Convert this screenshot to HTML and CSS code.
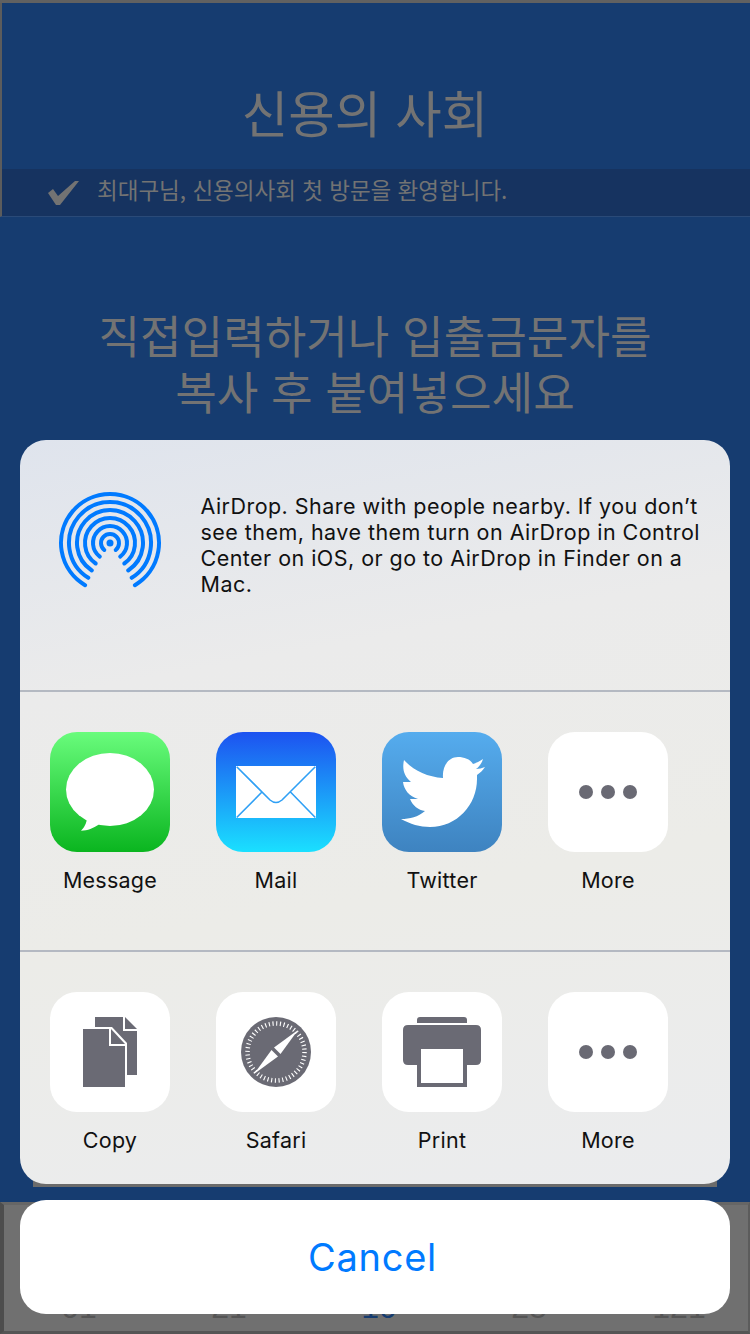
FILE: index.html
```html
<!DOCTYPE html>
<html lang="ko">
<head>
    <meta charset="UTF-8">
    <title>신용의 사회</title>
    <link rel="stylesheet" href="styles.css">
</head>
<body>

<div class="app">
    <div class="top-band">
        <h1>신용의 사회</h1>
        <div class="welcome">
            <svg class="check" viewBox="0 0 32 26" width="32" height="26"><path d="M1 13 L6 9 L11 16 L28 1 L32 1 L13 25 L9 25 Z" fill="#737373"/></svg>
            <span>최대구님, 신용의사회 첫 방문을 환영합니다.</span>
        </div>
    </div>
    <p class="prompt">직접입력하거나 입출금문자를<br>복사 후 붙여넣으세요</p>
    <div class="paste-box"></div>
    <div class="tabbar">
        <span>01</span>
        <span>21</span>
        <span class="on">10</span>
        <span>28</span>
        <span>121</span>
    </div>
</div>

<div class="sheet">
    <div class="panel">
        <div class="airdrop">
            <svg class="airdrop-icon" viewBox="0 0 104 104" width="104" height="104">
                <circle cx="52" cy="52" r="3.5" fill="#007aff"/>
                <g fill="none" stroke="#007aff" stroke-width="4" stroke-linecap="round">
                    <path d="M46.3 59 A9 9 0 1 1 57.7 59"/>
                    <path d="M41.8 65.6 A17 17 0 1 1 62.2 65.6"/>
                    <path d="M37.7 72.5 A25 25 0 1 1 66.3 72.5"/>
                    <path d="M33.8 79.5 A33 33 0 1 1 70.2 79.5"/>
                    <path d="M30.3 86.8 A41 41 0 1 1 73.7 86.8"/>
                    <path d="M27.1 94.2 A49 49 0 1 1 76.9 94.2"/>
                </g>
            </svg>
            <p>AirDrop. Share with people nearby. If you don’t see them, have them turn on AirDrop in Control Center on iOS, or go to AirDrop in Finder on a Mac.</p>
        </div>

        <div class="row">
            <div class="item">
                <div class="tile tile-message">
                    <svg viewBox="0 0 120 120" width="120" height="120">
                        <ellipse cx="60" cy="57.5" rx="44" ry="36.5" fill="#fff"/>
                        <path d="M37 85 C37 91 34 96 31 98.7 C38 98.7 43 96 49 92.5 Z" fill="#fff"/>
                    </svg>
                </div>
                <span>Message</span>
            </div>
            <div class="item">
                <div class="tile tile-mail">
                    <svg viewBox="0 0 120 120" width="120" height="120">
                        <rect x="20" y="34" width="80" height="52" fill="#fff"/>
                        <path d="M20.7 34.7 L54 68 Q60 73 66 68 L99.3 34.7 M20.7 85.5 L45.7 60.3 M99.3 85.5 L74.7 60.3" fill="none" stroke="#2fa0f5" stroke-width="1.6"/>
                    </svg>
                </div>
                <span>Mail</span>
            </div>
            <div class="item">
                <div class="tile tile-twitter">
                    <svg viewBox="0 0 120 120" width="120" height="120"><path d="M61 46 C45 45 31 38 22 28 C20 37 22 44 29 50 C26 50 23 50 21 50 C22 58 27 64 36 67 L28 67 C31 74 36 78 43 79 C36 85 28 87 19 87 C28 92 38 95 48 95 C75 95 95 73 95 47 L95 43 C98 41 101 38 103 35 C100 36 97 37 94 37 C97 35 100 31 101 27 C98 29 94 31 91 32 C88 27 82 25 76 25 C66 25 60 35 61 46 Z" fill="#fff"/></svg>
                </div>
                <span>Twitter</span>
            </div>
            <div class="item">
                <div class="tile dots"><i></i><i></i><i></i></div>
                <span>More</span>
            </div>
        </div>

        <div class="row">
            <div class="item">
                <div class="tile">
                    <svg viewBox="0 0 120 120" width="120" height="120">
                        <path d="M45 25 H73 V39 H87 V83 H45 Z" fill="#6a6a74"/>
                        <path d="M75 25 L87 37 H75 Z" fill="#6a6a74"/>
                        <path d="M31 35 H62 L77 51 V97 H31 Z" fill="#fff"/>
                        <path d="M33 37 H59 V54 H75 V95 H33 Z" fill="#6a6a74"/>
                        <path d="M61 37 L75 52 H61 Z" fill="#6a6a74"/>
                    </svg>
                </div>
                <span>Copy</span>
            </div>
            <div class="item">
                <div class="tile">
                    <svg viewBox="0 0 120 120" width="120" height="120">
                        <circle cx="60" cy="60" r="35" fill="#6a6a74"/>
                        <circle cx="60" cy="60" r="28.5" fill="none" stroke="#fff" stroke-width="4.5" stroke-dasharray="1.1 2.63"/>
                        <path d="M82 38 L64.5 62 L58 55.5 Z" fill="#fff"/>
                        <path d="M38 82 L62 64.5 L55.5 58 Z" fill="#fff"/>
                    </svg>
                </div>
                <span>Safari</span>
            </div>
            <div class="item">
                <div class="tile">
                    <svg viewBox="0 0 120 120" width="120" height="120">
                        <path d="M35 31 V28 Q35 25 38 25 H82 Q85 25 85 28 V31 Z" fill="#6a6a74"/>
                        <path d="M26 33 H94 Q99 33 99 38 V68 Q99 73 94 73 H26 Q21 73 21 68 V38 Q21 33 26 33 Z" fill="#6a6a74"/>
                        <rect x="35" y="55" width="50" height="40" fill="#6a6a74"/>
                        <rect x="39" y="57" width="42" height="34" fill="#fff"/>
                    </svg>
                </div>
                <span>Print</span>
            </div>
            <div class="item">
                <div class="tile dots"><i></i><i></i><i></i></div>
                <span>More</span>
            </div>
        </div>
    </div>
    <button class="cancel">Cancel</button>
</div>

</body>
</html>
```

FILE: styles.css
```css
html, body {
    margin: 0;
    padding: 0;
}
body {
    width: 750px;
    height: 1334px;
    overflow: hidden;
    position: relative;
    background: #163c70;
    font-family: Inter, "Noto Sans CJK KR", sans-serif;
}

/* dimmed page underneath the share sheet */
.app {
    height: 1334px;
    display: flex;
    flex-direction: column;
    border-top: 3px solid #616161;
    box-sizing: border-box;
    color: #737373;
    font-family: "Noto Sans CJK KR", sans-serif;
}
.top-band {
    border-left: 2px solid #5c5c5c;
    border-bottom: 1px solid #2a4a78;
}
h1 {
    margin: 0;
    padding: 76px 22px 0 0;
    height: 90px;
    font-size: 50.5px;
    line-height: 64px;
    font-weight: 400;
    text-align: center;
}
.welcome {
    height: 47px;
    background: #163360;
    display: flex;
    align-items: center;
    padding-left: 45px;
    gap: 18px;
    font-size: 22.5px;
}
.welcome span {
    padding-bottom: 7px;
}
.prompt {
    margin: 90px 0 0;
    font-size: 45.2px;
    line-height: 56px;
    text-align: center;
}
.paste-box {
    margin: 60px 33px 15px;
    flex: 1;
    background: #6b6b6b;
}
.tabbar {
    height: 132px;
    box-sizing: border-box;
    background: #707070;
    border-style: solid;
    border-width: 3px 2px 3px 4px;
    border-color: #666 #5c5c5c #555 #4d4d4d;
    display: grid;
    grid-template-columns: repeat(5, 150px);
    align-items: end;
    padding: 0 0 2px 0;
    font-family: "Liberation Sans", sans-serif;
    font-size: 32px;
    line-height: 44px;
    text-align: center;
    color: #555;
}
.tabbar .on {
    color: #163c70;
}

.sheet {
    position: absolute;
    left: 20px;
    top: 440px;
    width: 710px;
}
.panel {
    height: 744px;
    border-radius: 26px;
    background: linear-gradient(170deg, #dfe4ed 0%, #ebebeb 30%, #ecece8 60%, #ebecee 100%);
}
.airdrop {
    height: 250px;
    display: flex;
    border-bottom: 2px solid #b4b9c2;
}
.airdrop-icon {
    margin: 51px 0 0 38px;
}
.airdrop p {
    margin: 53px 0 0 38.5px;
    width: 510px;
    font-size: 21.5px;
    line-height: 26px;
    letter-spacing: 0.46px;
    color: #111;
}
.row {
    height: 260px;
    display: flex;
    padding: 40px 0 0 30px;
    box-sizing: border-box;
    gap: 46px;
    border-bottom: 2px solid #b4b9c2;
}
.row:last-child {
    border-bottom: 0;
}
.item {
    width: 120px;
    display: flex;
    flex-direction: column;
    align-items: center;
    font-size: 21.5px;
    line-height: 26px;
    letter-spacing: 0.25px;
    color: #111;
}
.item span {
    margin-top: 15px;
}
.tile {
    width: 120px;
    height: 120px;
    flex: none;
    border-radius: 27px;
    background: #fff;
    overflow: hidden;
}
.tile svg {
    display: block;
}
.tile-message {
    background: linear-gradient(#69fc7c, #0ab51f);
}
.tile-mail {
    background: linear-gradient(#1d52f0, #1ae0ff);
}
.tile-twitter {
    background: linear-gradient(#55acee, #3e83c0);
}
.dots {
    display: flex;
    align-items: center;
    justify-content: center;
    gap: 8px;
}
.dots i {
    width: 14px;
    height: 14px;
    border-radius: 50%;
    background: #6a6a74;
}
.cancel {
    display: block;
    width: 710px;
    height: 114px;
    margin-top: 16px;
    border: 0;
    padding: 0 5px 0 0;
    border-radius: 26px;
    background: #fff;
    color: #007aff;
    font-family: Inter, sans-serif;
    font-size: 38px;
    letter-spacing: 0.7px;
}
```
